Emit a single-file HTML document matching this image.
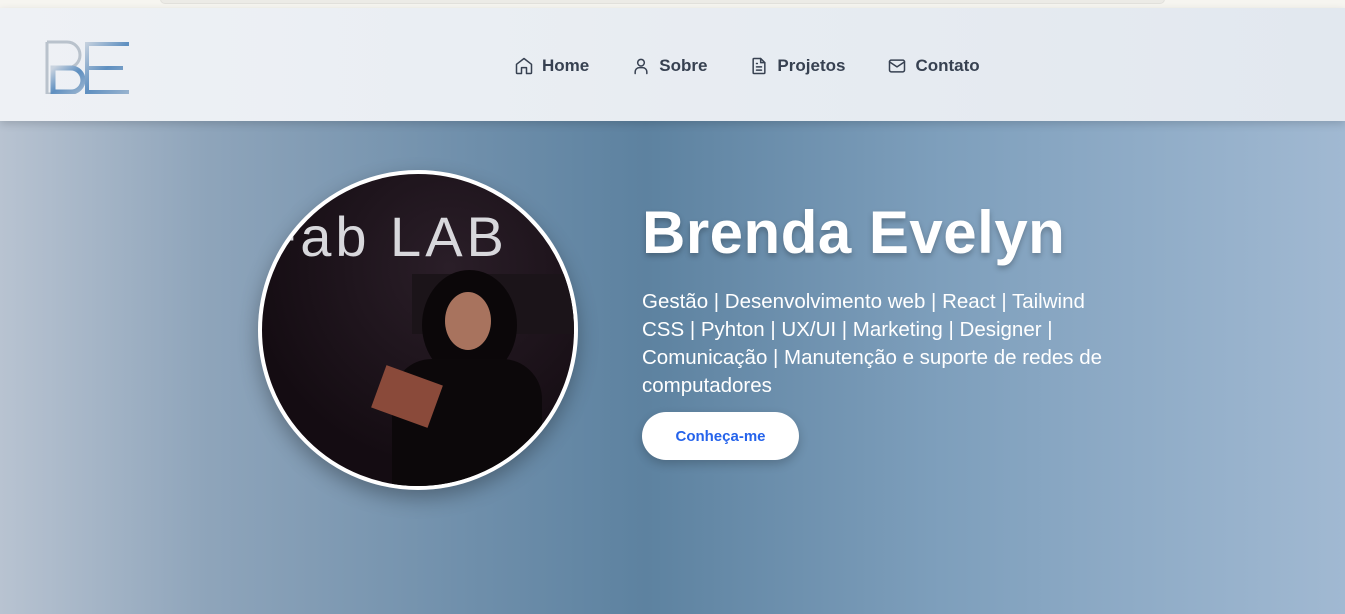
<!DOCTYPE html>
<html><head><meta charset="utf-8"><style>
*{margin:0;padding:0;box-sizing:border-box}
body{width:1345px;height:614px;overflow:hidden;font-family:"Liberation Sans",sans-serif;background:#fff}
.top{height:8px;background:#f6f5f0;position:relative}
.top div{position:absolute;left:160px;width:1005px;top:-6px;height:10px;border-radius:6px;background:#ecebe6;border:1px solid #e2e1dc}
header{height:113px;background:linear-gradient(90deg,#eef1f5,#e2e8ef);position:relative;box-shadow:0 3px 8px rgba(0,0,0,.15);z-index:2}
nav{position:absolute;left:514px;top:48px;display:flex;font-size:17px;color:#374151;font-weight:bold}
nav span{display:flex;align-items:center;gap:8px;margin-right:42px}
nav svg{width:20px;height:20px;fill:none;stroke:#374151;stroke-width:1.8;stroke-linecap:round;stroke-linejoin:round}
.hero{position:absolute;top:121px;left:0;width:1345px;height:493px;background:linear-gradient(90deg,#b8c3d1 0%,#8fa5bb 15%,#6f8fab 35%,#5d82a0 48%,#7e9fbc 70%,#a1b9d2 100%)}
.photo{position:absolute;left:258px;top:170px;width:320px;height:320px;border-radius:50%;border:4px solid #fff;overflow:hidden;background:radial-gradient(circle at 60% 30%,#2a1e28,#140c12 70%);box-shadow:0 8px 20px rgba(0,0,0,.3)}
h1{position:absolute;left:642px;top:198px;font-size:60px;color:#fff;font-weight:bold;text-shadow:0 3px 6px rgba(0,0,0,.25);letter-spacing:0.5px}
p{position:absolute;left:642px;top:288px;width:462px;font-size:20.5px;line-height:28px;color:#fff}
.btn{position:absolute;left:642px;top:412px;width:157px;height:48px;border-radius:24px;background:#fff;color:#2563eb;font-weight:bold;font-size:15px;display:flex;align-items:center;justify-content:center;box-shadow:0 4px 10px rgba(0,0,0,.2)}
</style></head><body>
<div class="top"><div></div></div>
<header>
<svg style="position:absolute;left:45px;top:24px" width="88" height="62" viewBox="0 0 88 62">
<defs><linearGradient id="g" x1="0" x2="1" y1="0" y2="1"><stop offset="0" stop-color="#c9d3df"/><stop offset=".5" stop-color="#5e8fc0"/><stop offset="1" stop-color="#9ab4cf"/></linearGradient></defs>
<path d="M2 10h20a13 13 0 0 1 0 26H8M2 10v52h22a13 13 0 0 0 0-26" fill="none" stroke="#b9c2cc" stroke-width="3"/>
<path d="M8 36h18a12 12 0 0 1 0 24H8z" fill="none" stroke="url(#g)" stroke-width="5"/>
<path d="M40 10h44v4H44v20h34v4H44v20h40v4H40z" fill="url(#g)"/>
</svg>
<nav>
<span><svg viewBox="0 0 24 24"><path d="M3 10l9-7 9 7v10a1 1 0 0 1-1 1h-5v-7h-6v7H4a1 1 0 0 1-1-1z"/></svg>Home</span>
<span><svg viewBox="0 0 24 24"><circle cx="12" cy="8" r="4"/><path d="M5 21v-2a5 5 0 0 1 5-5h4a5 5 0 0 1 5 5v2"/></svg>Sobre</span>
<span><svg viewBox="0 0 24 24"><path d="M14 3H6a1 1 0 0 0-1 1v16a1 1 0 0 0 1 1h12a1 1 0 0 0 1-1V8z"/><path d="M14 3v5h5M9 13h6M9 17h6M9 9h1"/></svg>Projetos</span>
<span><svg viewBox="0 0 24 24"><rect x="3" y="5" width="18" height="14" rx="2"/><path d="M3 7l9 6 9-6"/></svg>Contato</span>
</nav>
</header>
<div class="hero"></div>
<div class="photo">
<div style="position:absolute;left:0px;top:30px;font-size:56px;color:#d8d8dc;letter-spacing:4px">Fab LAB</div>
<div style="position:absolute;left:150px;top:100px;width:170px;height:60px;background:#1b1419"></div>
<div style="position:absolute;left:160px;top:96px;width:95px;height:110px;border-radius:50%;background:#0b0709"></div>
<div style="position:absolute;left:183px;top:118px;width:46px;height:58px;border-radius:50%;background:#a8735e"></div>
<div style="position:absolute;left:130px;top:185px;width:150px;height:160px;border-radius:40px 40px 0 0;background:#0c080a"></div>
<div style="position:absolute;left:115px;top:200px;width:60px;height:45px;background:#8a4a3a;transform:rotate(20deg)"></div>
</div>
<h1>Brenda Evelyn</h1>
<p>Gestão | Desenvolvimento web | React | Tailwind CSS | Pyhton | UX/UI | Marketing | Designer | Comunicação | Manutenção e suporte de redes de computadores</p>
<div class="btn">Conheça-me</div>
</body></html>
